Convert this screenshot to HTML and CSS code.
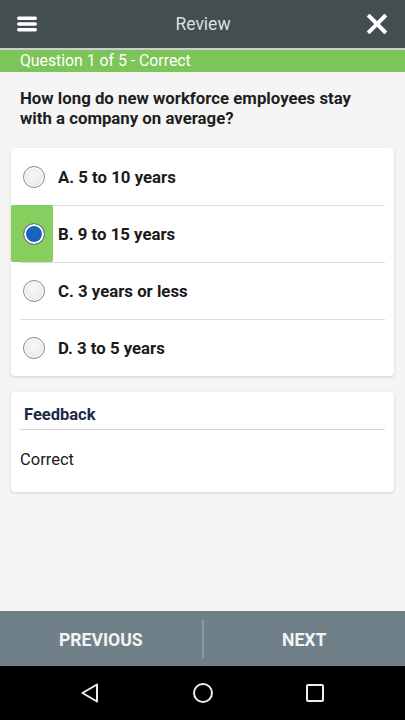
FILE: index.html
```html
<!DOCTYPE html>
<html>
<head>
<meta charset="utf-8">
<link rel="stylesheet" href="styles.css">
</head>
<body>
<div class="app">
  <header class="topbar">
    <svg class="icon-menu" width="20" height="16" viewBox="0 0 20 16">
      <rect x="0" y="0.5" width="20" height="3.6" rx="1.8" fill="#fff"/>
      <rect x="0" y="6.2" width="20" height="3.6" rx="1.8" fill="#fff"/>
      <rect x="0" y="11.9" width="20" height="3.6" rx="1.8" fill="#fff"/>
    </svg>
    <div class="title">Review</div>
    <svg class="icon-close" width="20" height="20" viewBox="0 0 20 20">
      <path d="M2.5 2.5 L17.5 17.5 M17.5 2.5 L2.5 17.5" stroke="#fff" stroke-width="4" stroke-linecap="square"/>
    </svg>
  </header>
  <div class="status">Question 1 of 5 - Correct</div>
  <main class="content">
    <p class="question">How long do new workforce employees stay with a company on average?</p>
    <div class="card options">
      <div class="option">
        <div class="mark"><span class="radio"></span></div>
        <div class="label">A. 5 to 10 years</div>
      </div>
      <div class="option">
        <div class="mark correct"><span class="radio checked"></span></div>
        <div class="label">B. 9 to 15 years</div>
      </div>
      <div class="option">
        <div class="mark"><span class="radio"></span></div>
        <div class="label">C. 3 years or less</div>
      </div>
      <div class="option">
        <div class="mark"><span class="radio"></span></div>
        <div class="label">D. 3 to 5 years</div>
      </div>
    </div>
    <div class="card feedback">
      <div class="fb-title">Feedback</div>
      <div class="fb-text">Correct</div>
    </div>
  </main>
  <nav class="actions">
    <div class="btn">PREVIOUS</div>
    <div class="sep"></div>
    <div class="btn">NEXT</div>
  </nav>
  <div class="sysnav">
    <svg width="20" height="22" viewBox="0 0 20 22">
      <path d="M17 2.5 L2.5 11 L17 19.5 Z" fill="none" stroke="#eee" stroke-width="2" stroke-linejoin="round"/>
    </svg>
    <svg width="22" height="22" viewBox="0 0 22 22">
      <circle cx="11" cy="11" r="9" fill="none" stroke="#eee" stroke-width="2"/>
    </svg>
    <svg width="20" height="20" viewBox="0 0 20 20">
      <rect x="2" y="2" width="16" height="16" rx="1" fill="none" stroke="#eee" stroke-width="2"/>
    </svg>
  </div>
</div>
</body>
</html>
```

FILE: styles.css
```css
* { box-sizing: border-box; }
html, body { margin: 0; padding: 0; }
body {
  font-family: Roboto, "Liberation Sans", sans-serif;
  background: #f5f5f5;
}
.app {
  width: 405px;
  height: 720px;
  display: flex;
  flex-direction: column;
}
.topbar {
  height: 50px;
  background: #434e50;
  border-bottom: 2px solid #c9cfcf;
  display: flex;
  align-items: center;
  padding: 0 18px 0 17px;
}
.icon-menu { display: block; margin-top: -1px; }
.icon-close { display: block; margin-top: -1px; }
.title {
  flex: 1;
  text-align: center;
  color: #dcdfdf;
  font-size: 17.5px;
  margin-top: -1px;
  padding-left: 2px;
}
.status {
  height: 22px;
  background: #7dc459;
  color: #fff;
  font-size: 15.8px;
  line-height: 22px;
  padding-left: 20px;
}
.content {
  flex: 1;
  padding: 16px 11px 0;
}
.question {
  margin: 0 0 20px;
  padding: 0 9px;
  max-width: 370px;
  font-size: 16.8px;
  font-weight: bold;
  line-height: 20px;
  color: #1e1e1e;
}
.card {
  background: #fff;
  border-radius: 4px;
  box-shadow: 0 1px 3px rgba(0,0,0,0.16);
}
.option {
  display: flex;
  align-items: stretch;
  height: 57px;
  position: relative;
}
.option + .option::before {
  content: "";
  position: absolute;
  left: 9px;
  right: 9px;
  top: 0;
  height: 1px;
  background: #dcdcdc;
}
.mark {
  width: 42px;
  display: flex;
  align-items: center;
  padding-left: 12px;
}
.mark.correct {
  background: #86cf5f;
  border-radius: 2px;
  position: relative;
  z-index: 1;
}
.radio {
  width: 22px;
  height: 22px;
  border-radius: 50%;
  border: 1px solid #8a8a8a;
  background: radial-gradient(circle at 50% 40%, #f8f8f8 0%, #ececec 60%, #e2e2e2 100%);
  box-shadow: inset 0 0 0 1px #fff;
}
.radio.checked {
  background: #1b63bd;
  box-shadow: inset 0 0 0 2px #fff;
  border-color: #7a7a7a;
}
.label {
  display: flex;
  align-items: center;
  padding-left: 5px;
  font-size: 16.8px;
  font-weight: bold;
  color: #1a1a1a;
}
.feedback {
  margin-top: 16px;
  height: 100px;
  padding: 0 9px;
}
.fb-title {
  height: 38px;
  padding: 13px 0 0 4px;
  font-size: 16.5px;
  font-weight: bold;
  color: #1c2a48;
  border-bottom: 1px solid #d6d6d6;
}
.fb-text {
  padding-top: 20px;
  font-size: 16.5px;
  color: #1a1a1a;
}
.actions {
  height: 55px;
  background: #6f8088;
  display: flex;
  align-items: center;
}
.btn {
  flex: 1;
  text-align: center;
  color: #f2f4f5;
  font-weight: bold;
  font-size: 17.6px;
  margin-top: 2px;
}
.sep {
  width: 2px;
  height: 38px;
  background: #8a9ba2;
}
.sysnav {
  height: 54px;
  background: #000;
  display: flex;
  align-items: center;
  justify-content: space-between;
  padding: 0 80px 0 80px;
}
.sysnav svg { display: block; }
```
